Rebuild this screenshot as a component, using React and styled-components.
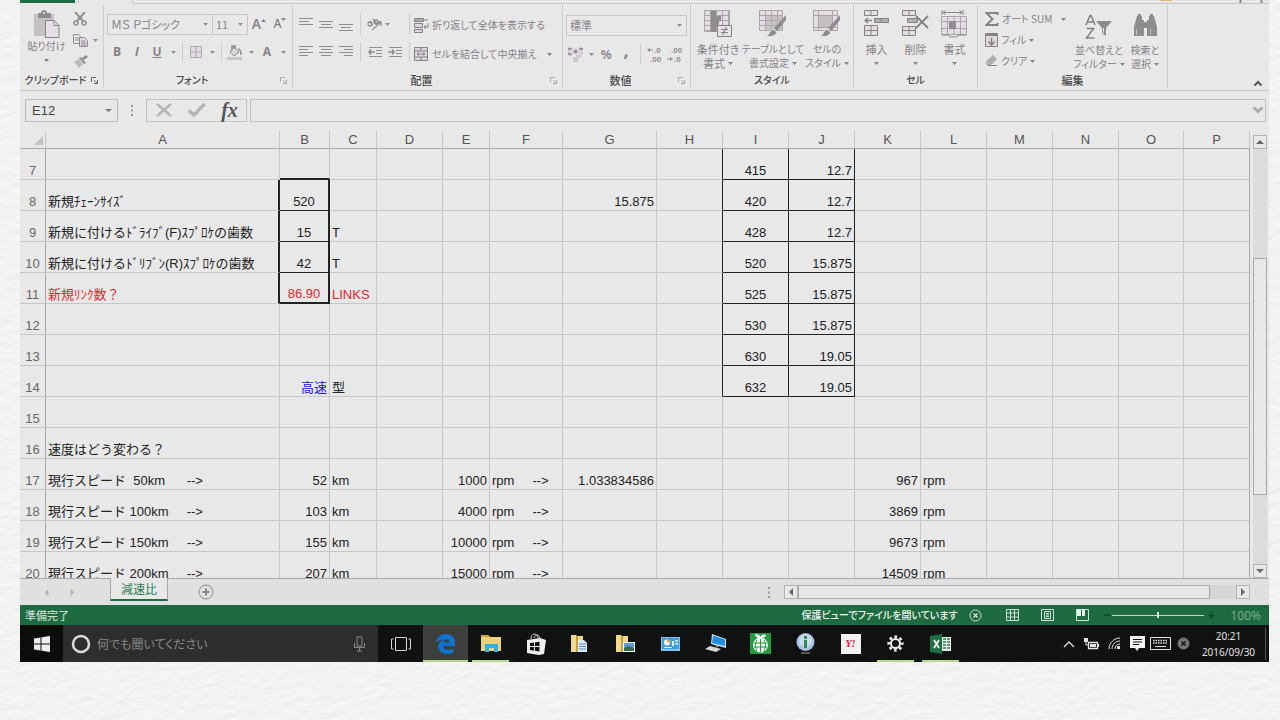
import React from "react";
import styled, { createGlobalStyle, css } from "styled-components";

const JP = `"Liberation Sans", "Noto Sans CJK JP", sans-serif`;
const UI = `"Noto Sans CJK JP", "Open Sans", sans-serif`;
const ink = "#8f8c8f";
const line = "#c6c6c6";

const GlobalStyle = createGlobalStyle`
  * { box-sizing: border-box; }
  body { margin: 0; background: #eeeeee; font-family: ${UI}; font-feature-settings: "palt"; }
  button, input, select { font: inherit; font-feature-settings: inherit; color: inherit; background: none; border: 0; padding: 0; margin: 0; border-radius: 0; }
  svg { display: block; flex: none; }
`;

const Paper = styled.svg`
  position: fixed;
  inset: 0;
  width: 100%;
  height: 100%;
  z-index: -1;
  opacity: 0.4;
`;
const Page = styled.div`
  min-height: 100vh;
  padding: 0 11px 58px 20px;
  overflow: hidden;
`;
const Window = styled.main`
  background: #e8e8e8;
`;

/* ---------- ribbon ---------- */
const TabStrip = styled.div`
  display: flex;
  align-items: flex-start;
  height: 5px;
`;
const FileTab = styled.div`
  width: 55px;
  height: 3px;
  background: #1f6b41;
`;
const OpenTab = styled.div`
  width: 55px;
  height: 3px;
  border-left: 1px solid ${line};
  border-right: 1px solid ${line};
  margin-left: 3px;
`;
const TabRule = styled.div`
  flex: 1;
  height: 4px;
  border-bottom: 1px solid ${line};
  display: flex;
  justify-content: flex-end;
`;
const Ribbon = styled.div`
  display: flex;
  height: 86px;
  padding-bottom: 2px;
  border-bottom: 1px solid ${line};
  color: #858285;
  font-size: 11px;
  line-height: 14px;
`;
const Group = styled.section`
  flex: none;
  width: ${(p) => p.$w}px;
  border-right: 1px solid #cdcdcd;
  display: flex;
  flex-direction: column;
`;
const GroupBody = styled.div`
  flex: 1;
  min-height: 0;
  display: flex;
  padding: 4px ${(p) => (p.$inset ? 1 : 3)}px 0 ${(p) => (p.$inset ? 7 : 3)}px;
`;
const GroupFoot = styled.div`
  height: 16px;
  display: flex;
  align-items: center;
  color: #4a4a4a;
`;
const GroupName = styled.span`
  flex: 1;
  text-align: center;
  white-space: nowrap;
  font-size: ${(p) => (p.$small ? 10 : 11)}px;
  font-weight: 500;
`;
const Launcher = styled.button`
  width: 12px;
  color: ${(p) => (p.$strong ? "#666" : "#aaa")};
`;
const Lines = styled.div`
  display: flex;
  flex-direction: column;
  gap: ${(p) => p.$gap || 3}px;
`;
const Line = styled.div`
  display: flex;
  align-items: center;
  height: ${(p) => p.$h || 22}px;
`;
const Tool = styled.button`
  display: flex;
  align-items: center;
  justify-content: ${(p) => (p.$start ? "flex-start" : "center")};
  flex: none;
  width: ${(p) => p.$w || 20}px;
  height: 20px;
  color: ${ink};
`;
const Letter = styled(Tool)`
  font-family: "Open Sans", sans-serif;
  font-size: ${(p) => p.$size || 12}px;
  font-weight: ${(p) => (p.$bold ? 700 : 600)};
  font-style: ${(p) => (p.$italic ? "italic" : "normal")};
  text-decoration: ${(p) => (p.$under ? "underline" : "none")};
  padding-bottom: ${(p) => (p.$raised ? 8 : 0)}px;
  color: #858285;
`;
const Rule = styled.span`
  width: 1px;
  height: 20px;
  margin: 0 ${(p) => p.$m ?? 4}px;
  background: #cdcdcd;
`;
const TextTool = styled.button`
  display: flex;
  align-items: center;
  gap: ${(p) => p.$gap ?? 3}px;
  height: 20px;
  white-space: nowrap;
  font-size: ${(p) => (p.$small ? 10 : 11)}px;
  svg:last-child:not(:first-child) { margin-left: ${(p) => p.$caretGap || 0}px; }
`;
const ComboBox = styled.label`
  display: flex;
  align-items: center;
  width: ${(p) => p.$w}px;
  height: 21px;
  border: 1px solid ${line};
  margin-right: ${(p) => (p.$join ? -1 : 0)}px;
  select {
    appearance: none;
    flex: 1;
    min-width: 0;
    height: 19px;
    padding-left: 3px;
    outline: 0;
    line-height: 16px;
  }
  svg { margin-right: 4px; pointer-events: none; color: ${ink}; }
`;
const BigTool = styled.button`
  display: flex;
  flex-direction: column;
  align-items: center;
  flex: none;
  width: ${(p) => p.$w}px;
  padding-top: ${(p) => (p.$low ? 5 : 1)}px;
  color: inherit;
  white-space: nowrap;
  font-size: ${(p) => (p.$small ? 10 : 11)}px;
  svg + span { margin-top: ${(p) => p.$drop ?? 4}px; }
`;
const Word = styled.span`
  display: flex;
  align-items: center;
  gap: 3px;
  min-height: 14px;
`;
const RibbonEnd = styled.div`
  flex: 1;
  display: flex;
  align-items: flex-end;
  justify-content: flex-end;
  padding-right: 6px;
`;

/* ---------- formula bar ---------- */
const FormulaBar = styled.div`
  display: flex;
  align-items: center;
  height: 40px;
  padding: 0 3px 2px 5px;
`;
const NameBox = styled.label`
  display: flex;
  align-items: center;
  width: 93px;
  height: 23px;
  border: 1px solid #bdbdbd;
  font: 13px ${JP};
  color: #444;
  input { flex: 1; min-width: 0; padding-left: 6px; outline: 0; }
  svg { margin-right: 5px; color: #777; }
`;
const Grip = styled.span`
  width: ${(p) => p.$w}px;
  display: flex;
  justify-content: center;
  color: #999;
`;
const FxBox = styled.div`
  display: flex;
  align-items: center;
  width: 101px;
  height: 23px;
  border: 1px solid #c3c3c3;
`;
const FxButton = styled.button`
  width: 33px;
  display: flex;
  justify-content: center;
  color: #b5b5b5;
`;
const FxMark = styled(FxButton)`
  font: italic bold 20px/20px "Liberation Serif", serif;
  color: #555;
`;
const FormulaField = styled.label`
  flex: 1;
  display: flex;
  align-items: center;
  height: 23px;
  margin-left: 3px;
  border: 1px solid #c3c3c3;
  color: #aaa;
  input { flex: 1; min-width: 0; outline: 0; color: #222; }
`;

/* ---------- sheet ---------- */
const SheetArea = styled.div`
  display: flex;
  height: 448px;
  overflow: hidden;
  border-bottom: 1px solid #a9a9a9;
`;
const Grid = styled.table`
  flex: 1;
  width: 100%;
  table-layout: fixed;
  border-collapse: separate;
  border-spacing: 0;
  font: 13px/16px ${JP};
  color: #222;
`;
const ColHead = styled.th`
  height: 18px;
  padding: 1px 0 0;
  font-weight: 400;
  color: #555;
  line-height: 16px;
  border-right: 1px solid ${line};
  border-bottom: 1px solid #a9a9a9;
  overflow: hidden;
`;
const Corner = styled(ColHead)`
  svg { margin-left: auto; margin-right: 2px; }
`;
const RowHead = styled.th`
  padding: 0;
  font-weight: 400;
  color: #666;
  vertical-align: bottom;
  text-align: center;
  border-right: 1px solid #a9a9a9;
  border-bottom: 1px solid ${line};
`;
const strong = "#222";
const Cell = styled.td`
  height: 31px;
  padding: 0 2px;
  vertical-align: bottom;
  white-space: pre;
  overflow: visible;
  text-align: ${(p) => p.$align || "left"};
  color: ${(p) => p.$color || "inherit"};
  border-right: 1px solid ${line};
  border-bottom: 1px solid ${line};
  ${(p) => p.$right && css`border-right: ${p.$right}px solid ${strong};`}
  ${(p) => p.$bottom && css`border-bottom: ${p.$bottom}px solid ${strong};`}
  ${(p) => p.$last && css`border-right-color: #a9a9a9;`}
`;

const VScroll = styled.div`
  width: 19px;
  padding: 4px 2px 0 3px;
  display: flex;
  flex-direction: column;
`;
const Arrow = styled.button`
  flex: none;
  width: 14px;
  height: 14px;
  border: 1px solid #b3b3b3;
  display: flex;
  align-items: center;
  justify-content: center;
  color: #666;
  background: #e8e8e8;
`;
const VTrack = styled.div`
  flex: 1;
  display: flex;
  flex-direction: column;
  background: #dcdcdc;
  width: 14px;
`;
const VThumb = styled.div`
  height: 237px;
  margin-top: 109px;
  border: 1px solid #a9a9a9;
  background: #e8e8e8;
`;

const SheetBar = styled.div`
  display: flex;
  align-items: center;
  height: 26px;
  padding-right: 19px;
  background: #e0e0e0;
`;
const NavArrow = styled.button`
  width: 26px;
  margin-left: ${(p) => p.$lead || 0}px;
  display: flex;
  justify-content: center;
  color: #b0b0b0;
`;
const SheetTab = styled.button`
  align-self: flex-start;
  width: 58px;
  height: 23px;
  margin: -1px 30px 0 25px;
  background: #e8e8e8;
  border-left: 1px solid #a9a9a9;
  border-right: 1px solid #a9a9a9;
  border-bottom: 2px solid #1f6b41;
  color: #2b7a50;
  font-size: 12px;
  line-height: 20px;
`;
const AddSheet = styled.button`
  display: flex;
  color: #888;
`;
const Fill = styled.div`
  flex: 1;
`;
const HScroll = styled.div`
  width: 466px;
  display: flex;
  background: #d6d6d6;
`;
const HTrack = styled.div`
  flex: 1;
`;
const HThumb = styled.div`
  width: 94%;
  height: 14px;
  border: 1px solid #a9a9a9;
  background: #e8e8e8;
`;

/* ---------- status bar ---------- */
const StatusBar = styled.footer`
  display: flex;
  align-items: center;
  height: 20px;
  padding: 0 8px 0 5px;
  background: #1f6b41;
  color: #dbe7df;
  font-size: 11px;
  line-height: 20px;
  white-space: nowrap;
`;
const Notice = styled.span`
  font-size: 10px;
  font-weight: 500;
  color: #eef4f0;
`;
const StatusButton = styled.button`
  display: flex;
  align-items: center;
  justify-content: center;
  width: ${(p) => p.$w || 20}px;
  margin-left: ${(p) => p.$ml || 0}px;
  color: ${(p) => p.$c || "#cfdfd5"};
`;
const ZoomSlider = styled.input`
  appearance: none;
  width: 92px;
  height: 12px;
  background: linear-gradient(#c4d6cb, #c4d6cb) center / 100% 1px no-repeat;
  &::-webkit-slider-thumb {
    appearance: none;
    width: 2px;
    height: 6px;
    background: #dbe7df;
  }
`;
const Percent = styled.span`
  margin-left: 12px;
  font: 12px "Open Sans", sans-serif;
  color: #7fb08f;
`;

/* ---------- taskbar ---------- */
const Taskbar = styled.nav`
  display: flex;
  height: 37px;
  background: #101211;
`;
const StartButton = styled.button`
  width: 43px;
  display: flex;
  align-items: center;
  justify-content: center;
  background: #0a0d09;
`;
const Search = styled.label`
  width: 315px;
  display: flex;
  align-items: center;
  gap: 6px;
  padding: 0 13px 0 8px;
  background: #2e2e2e;
  color: #8a8a8a;
  font-size: 12px;
  input { flex: 1; min-width: 0; outline: 0; }
  input::placeholder { color: #8a8a8a; opacity: 1; }
`;
const TaskButton = styled.button`
  width: 45px;
  display: flex;
  flex-direction: column;
  align-items: center;
  background: ${(p) => (p.$active ? "#3d3f3d" : "transparent")};
  &::after {
    content: "";
    width: ${(p) => (p.$active ? 45 : 37)}px;
    height: 2px;
    background: ${(p) => (p.$active || p.$open ? "#bcd68c" : "transparent")};
  }
`;
const TaskIcon = styled.span`
  flex: 1;
  display: flex;
  align-items: center;
  padding-top: 2px;
`;
const Tray = styled.div`
  margin-left: auto;
  display: flex;
  align-items: center;
  color: #e4e4e4;
`;
const TrayButton = styled.button`
  width: 23px;
  display: flex;
  justify-content: center;
`;
const Clock = styled.time`
  width: 71px;
  padding-right: 3px;
  text-align: center;
  font: 10px/16px "Noto Sans", sans-serif;
  border-right: 1px solid #555;
  margin-right: 3px;
`;

/* ---------- drawings ---------- */
const Svg = ({ w, h, vb, children, ...rest }) => (
  <svg width={w} height={h} viewBox={vb || `0 0 ${w} ${h}`} fill="none" stroke="currentColor" aria-hidden="true" {...rest}>
    {children}
  </svg>
);
const Caret = ({ w = 5 }) => (
  <Svg w={w} h={3} vb="0 0 6 3" preserveAspectRatio="none"><path d="M0 0h6L3 3z" fill="currentColor" stroke="none" /></Svg>
);
const Tri = ({ dir, s = 8 }) => {
  const d = { up: "M0 6h8L4 2z", down: "M0 2h8L4 6z", left: "M6 0v8L2 4z", right: "M2 0v8l4-4z" }[dir];
  return <Svg w={s} h={s} vb="0 0 8 8"><path d={d} fill="currentColor" stroke="none" /></Svg>;
};
const Dots = () => (
  <Svg w={3} h={11}><path d="M0 1h2M0 5.500h2M0 10h2" strokeWidth="2" /></Svg>
);
const LaunchIcon = () => (
  <Svg w={7} h={7}><path d="M.5 5V.5H5M3 3l3 3M6.500 3v3.500H3" /></Svg>
);
const PasteIcon = () => (
  <Svg w={27} h={28}>
    <path d="M1 4h20v22H1z" fill="#c4c1c4" stroke="none" />
    <path d="M5 3h3c0-4 6-4 6 0h4v5H5z" fill={ink} stroke="none" />
    <circle cx="11" cy="3" r="1" fill="#e8e8e8" stroke="none" />
    <path d="M12.500 10.500h8.500l5 5v12H12.500z" fill="#e6e0e6" />
    <path d="M21 10.500v5h5" />
  </Svg>
);
const CutIcon = () => (
  <Svg w={14} h={14} strokeWidth="2"><path d="M2 0l8 9M12 0L4 9" /><circle cx="3" cy="11" r="2" strokeWidth="1.500" /><circle cx="11" cy="11" r="2" strokeWidth="1.500" /></Svg>
);
const CopyIcon = () => (
  <Svg w={15} h={13}><path d="M.5.500h5l2 2v7h-7zM2 4h4M2 6h4" /><path d="M6.500 3.500h5l3 3v6h-8z" fill="#e0dbe0" /><path d="M8 7h4M8 9h5M8 11h5" /></Svg>
);
const BrushIcon = () => (
  <Svg w={15} h={13} stroke="none"><path d="M1 7l5-3 4 5-4 4z" fill="#bdbabd" /><path d="M6 3l2-1 5 6-2 1zM9 3l4-3 2 2-4 3z" fill={ink} /></Svg>
);
const BorderIcon = () => (
  <Svg w={12} h={12}><path d="M0 0h12v12H0z" fill="#e2dce2" stroke="none" /><path d="M.5.500h11v11H.500zM6 1v10M1 6h10" stroke="#aaa6aa" /></Svg>
);
const BucketIcon = () => (
  <Svg w={16} h={15}><path d="M7 2l5 5-5 4-4-4z" fill="#dcd7dc" /><path d="M5 5V1h3v3M11 4c3 0 3 3 3 6" strokeWidth="1.500" /><path d="M0 13.500h15" stroke="#c9c3c9" strokeWidth="3" /></Svg>
);
const Bars = ({ ws, align = 0, top = 0 }) => (
  <Svg w={14} h={14}>
    {ws.map((w, i) => {
      const x = align === 0 ? 0 : align === 1 ? (14 - w) / 2 : 14 - w;
      return <path key={i} d={`M${x} ${top + 1.5 + i * 3}h${w}`} />;
    })}
  </Svg>
);
const OrientIcon = () => (
  <Svg w={16} h={14} strokeWidth="1.300">
    <circle cx="3" cy="7" r="2" /><path d="M5 8L3 4M6 2l4 5" /><circle cx="9" cy="5" r="2" /><path d="M5 13l9-8M14 9V5h-4" />
  </Svg>
);
const IndentIcon = ({ out }) => (
  <Svg w={15} h={12}><path d="M1 1.500h13M8 4.500h6M8 7.500h6M1 10.500h13" /><path d={out ? "M7 6H1M3 3.500L1 6l2 2.500" : "M0 6h6M4 3.500L6 6 4 8.500"} strokeWidth="1.600" /></Svg>
);
const WrapIcon = () => (
  <Svg w={15} h={15}><path d="M.5.500h9v3h-9z" fill="#b0adb0" /><path d="M.5 5.500h8v4h-8zM.500 11.500h8v3h-8z" fill="#dcd7dc" /><path d="M10 2h4M14 5v4h-4M12 7l-2 2 2 2" /></Svg>
);
const MergeIcon = () => (
  <Svg w={14} h={14}><path d="M.5.500h13v13H.500zM0 4h14M0 10h14M7 0v4M7 10v4" fill="#dcd7dc" /><path d="M3 7h8M5 5.500L3 7l2 1.500M9 5.500L11 7 9 8.500" /></Svg>
);
const MoneyIcon = () => (
  <Svg w={16} h={15}><path d="M1 1.500h13v6H1z" fill="#dcd7dc" stroke="none" /><path d="M1 3.500v-2h3M11 1.500h3v2M1 5.500v2h3M14 5.500v1" strokeWidth="1.600" /><circle cx="7.500" cy="4.500" r="1.500" fill="currentColor" /><path d="M8 9h6M5 11.500h6M5 14h5" stroke="#bdbabd" strokeWidth="1.500" /></Svg>
);
const DecimalTool = ({ grow }) => (
  <Svg w={16} h={18} stroke="none" fill="currentColor" fontFamily="Liberation Sans" fontSize="8" fontWeight="700">
    <text x={grow ? 7 : 4} y="8">{grow ? ".0" : ".00"}</text>
    <text x={grow ? 3 : 7} y="17">{grow ? ".00" : ".0"}</text>
    <path d={grow ? "M0 5l3-2v1.500h3v1H3V7z" : "M6 14l-3-2v1.500H0v1h3V16z"} />
  </Svg>
);
const GridLines = ({ w, h }) => {
  let d = `M.5.500h${w}v${h}H.500z`;
  for (let x = 6; x < w; x += 6) d += `M${x + 0.5} .500v${h}`;
  for (let y = 5; y < h; y += 5) d += `M.5 ${y + 0.5}h${w}`;
  return <path d={d} fill="#e4dee4" stroke="#a9a6a9" />;
};
const CondIcon = () => (
  <Svg w={28} h={28}><GridLines w={25} h={21} /><path d="M7 1h5v21H7zM12 6h5v5h-5zM12 11h3v5h-3z" fill={ink} stroke="none" /><path d="M13.500 15.500h14v11h-14z" fill="#e8e3e8" /><path d="M17 19.500h7M17 22.500h7M22.500 17l-4 8" strokeWidth="1.200" /></Svg>
);
const PaintBrush = () => (
  <g stroke="none"><path d="M27 5v5l-9 11-3-3z" fill={ink} /><path d="M14 19l4 3c-2 5-7 5-11 4 4-1 3-6 7-7z" fill={ink} stroke="#e8e8e8" /></g>
);
const TableIcon = () => <Svg w={28} h={28}><GridLines w={23} h={20} /><path d="M7 6h16v15H7z" fill="#b3afb3" opacity=".6" stroke="none" /><PaintBrush /></Svg>;
const StyleIcon = () => <Svg w={28} h={28}><path d="M.5.500h24v20H.500zM5.500 0v21M19.500 0v21M0 5.500h24M0 17.500h24" fill="#e4dee4" stroke="#a9a6a9" /><path d="M6 6h13v11H6z" fill="#c3bfc3" stroke="none" /><PaintBrush /></Svg>;
const InsertIcon = () => (
  <Svg w={25} h={27}><path d="M.5.500h13v5H.500zM7 .500v5M.500 15.500h13v10H.500zM7 15.500v10M.500 20.500h13" fill="#e4dee4" /><path d="M10.500 8.500h14v4h-14z" fill="#b0adb0" /><path d="M17 8v5" /><path d="M8 10.500H1M4 8l-3 2.500L4 13" strokeWidth="1.400" /></Svg>
);
const DeleteIcon = () => (
  <Svg w={27} h={27}><path d="M.5.500h13v5H.500zM7 .500v5M.500 16.500h13v9H.500zM7 16.500v9M.500 20.500h13" fill="#e4dee4" /><path d="M5.500 8.500h10v4h-10z" fill="#b0adb0" /><path d="M14 6l12 12M26 6L14 18" strokeWidth="1.800" /></Svg>
);
const FormatIcon = () => (
  <Svg w={27} h={28}><path d="M1 0v5M22 0v5M2 2.500h19M4.500.500L2 2.500l2.500 2M18.500.500l2.500 2-2.500 2" /><path d="M.5 6.500h25v18H.500zM6.500 6v18M19.500 6v18M13 6v18M0 11.500h25M0 18.500h25" fill="#e4dee4" stroke="#a9a6a9" /><path d="M8 11h7v8H8z" fill={ink} stroke="none" /><path d="M1 25h6l3 2h5l3-2h7" /></Svg>
);
const SumIcon = () => <Svg w={14} h={14}><path d="M12.500 3V1H1.500l6 6-6 6h11v-2" strokeWidth="2" /></Svg>;
const FillIcon = () => <Svg w={13} h={14}><path d="M.5.500h12v13H.500z" fill="#dedade" /><path d="M1 2h11" strokeWidth="2" /><path d="M6.500 5v7M3.500 8.500l3 3.500 3-3.500" strokeWidth="1.600" /></Svg>;
const EraseIcon = () => <Svg w={13} h={12}><path d="M1 6l7-6 4 4-6 6H3z" fill="#b0adb0" stroke="none" /><path d="M0 7.500L3 10.500h9" /></Svg>;
const SortIcon = () => (
  <Svg w={28} h={26}><path d="M1 11L5 1.500h1L10 11M2.500 8h6M1.500 14.500h7l-7 9.500h8" strokeWidth="1.600" /><path d="M11 7h16l-6 7v8l-4-3v-5z" fill={ink} stroke="none" /><path d="M18.500 14v5" stroke="#e8e8e8" /></Svg>
);
const FindIcon = () => (
  <Svg w={25} h={24} stroke="none" fill={ink}><path d="M4 2h5v4h2v16H1V13zM16 2h5l3 11v9H14V6h2zM5 0h3v2H5zM17 0h3v2h-3zM11 8h3v6h-3z" /><path d="M3 15h1v6H3zM17 15h1v6h-1z" fill="#c4c1c4" /></Svg>
);
const WinLogo = () => <Svg w={16} h={16} stroke="none" fill="#eee"><path d="M0 2.500l6.500-1V7.500H0zM7.500 1.300L16 0v7.500H7.500zM0 8.500h6.500v6L0 13.500zM7.500 8.500H16V16l-8.500-1.300z" /></Svg>;
const MicIcon = () => <Svg w={11} h={16}><path d="M3 1h5v9H3zM.500 7v4.500h10V7M5.500 12v3M3 15h5" /></Svg>;
const ViewIcon = () => <Svg w={20} h={14} stroke="#d4d4d4"><path d="M4.500.500h11v13h-11zM2.500 2h-2v10h2M17.500 2h2v10h-2" /></Svg>;
const EdgeIcon = () => (
  <Svg w={19} h={20} stroke="none" fill="#0f74cf"><path d="M0 8.500C1 3 5 0 10 0c6 0 9 4 9 9v3H7c.3 4.500 6.500 5 10.500 2.500v4C15.500 19.500 13 20 11 20c-5 0-8.500-3-8.500-7.500 0-3.500 2-6 5-7C4.500 5.500 2 6.500 0 8.500zM7.200 8.500h6.300C13.500 4 7.500 4 7.200 8.500z" /></Svg>
);
const FolderIcon = () => <Svg w={20} h={17} stroke="none"><path d="M0 0h7l2 2h11v14H0z" fill="#f0d077" /><path d="M0 0h7l2 2H0z" fill="#d8a93b" /><path d="M4 9h13v8h-4v-4H8v4H4z" fill="#2cb1e6" /></Svg>;
const StoreIcon = () => <Svg w={20} h={22} stroke="none"><path d="M1 7l13-2 6 2-2 14-5 1L1 20z" fill="#f0f0f0" /><path d="M5 6c0-6 6-7 7-1M8 5c1-4 5-4 6 0" stroke="#ccc" fill="none" /><path d="M4 10l4-.5v3.500H4zM9 9.300l4.500-.5V13H9zM4 14h4v3.700L4 17zM9 14h4.500v4.500L9 17.800z" fill="#111" /></Svg>;
const FolderDoc = ({ photo }) => (
  <Svg w={19} h={19} stroke="none"><path d="M0 1h5l1 1h6v16H0z" fill="#f1d88b" /><path d="M5 2h2v16H5z" fill="#c79d45" />
    {photo ? <><path d="M7 8h12v10H7z" fill="#eef4fa" /><path d="M8 9h10v8H8z" fill="#5b9bd8" /><path d="M8 14l4-2 6 2v3H8z" fill="#3c6b4c" /></>
      : <><path d="M7 6h6l3 3v9H7z" fill="#dfeaf5" /><path d="M8 10h7M8 12.500h7M8 15h7" stroke="#4e8ec6" /></>}
  </Svg>
);
const PanelIcon = () => <Svg w={19} h={14} stroke="none"><path d="M0 0h19v14H0z" fill="#7cc5ee" /><path d="M1 1h17v11H1z" fill="#3f9fdc" /><circle cx="6" cy="5.500" r="3" fill="#fff" /><path d="M6 5.500V2.500a3 3 0 0 1 3 3z" fill="#f2a52c" /><path d="M11 4h2v5h-2zM14 3h3v1.500h-3zM14 6h3v1.500h-3zM3 10h8v1H3z" fill="#d8effb" /></Svg>;
const PcIcon = () => <Svg w={21} h={19} stroke="none"><path d="M7 0l14 5v9L6 10z" fill="#cfe6f6" /><path d="M8 1.500l12 4V12L7 9z" fill="#1f8fe0" /><path d="M0 15l5-3 11 3-5 3z" fill="#d5d9dc" /><path d="M9 11l5 1.500-2 1z" fill="#999" /></Svg>;
const MelonIcon = () => <Svg w={21} h={21} stroke="none"><path d="M0 0h21v21H0z" fill="#239a40" /><circle cx="10.500" cy="12" r="7.500" fill="#f2f7f2" /><path d="M10 5C6 5 5 3 5 1c3 0 5 1 5.500 3C11 2 13 1 16 2c0 2-2 3-5 3z" fill="#f2f7f2" /><path d="M4 10h13M4 14h13M10.500 6v13M7 7c-2 4-2 7 0 11M14 7c2 4 2 7 0 11" stroke="#239a40" fill="none" /></Svg>;
const InfoIcon = () => <Svg w={19} h={21} stroke="none"><circle cx="9.500" cy="9" r="9" fill="#a9c2e4" /><circle cx="9.500" cy="7.500" r="6.500" fill="#c9daf0" /><path d="M8 3h3v3H8zM8 7h3v8H8z" fill="#2c8c46" /><path d="M5 20h9" stroke="#999" /></Svg>;
const YahooTile = styled.span`
  width: 20px;
  height: 20px;
  background: #f1f1f1;
  color: #d6163a;
  font: italic bold 10px/20px "Liberation Serif", serif;
  text-align: center;
`;
const GearIcon = () => (
  <Svg w={17} h={17} stroke="#f0f0f0">
    <circle cx="8.500" cy="8.500" r="4.500" strokeWidth="2" />
    <circle cx="8.500" cy="8.500" r="6.800" strokeWidth="2.600" strokeDasharray="2.670 2.670" strokeDashoffset="1.300" />
  </Svg>
);
const ExcelIcon = () => (
  <Svg w={21} h={20} stroke="none"><path d="M10 3h11v14H10z" fill="#e6efe9" /><path d="M13 5h3M17 5h3M13 8h3M17 8h3M13 11h3M17 11h3M13 14h3M17 14h3" stroke="#2f7d50" strokeWidth="1.500" /><path d="M0 2l12-2v20L0 18z" fill="#1f7145" /><path d="M4 6l5 8M9 6l-5 8" stroke="#f0f0f0" strokeWidth="1.800" /></Svg>
);
const CircleX = ({ filled }) => (
  <Svg w={13} h={13}><circle cx="6.500" cy="6.500" r="5.500" fill={filled ? "#777" : "none"} stroke={filled ? "#777" : "currentColor"} /><path d="M4.500 4.500l4 4M8.500 4.500l-4 4" strokeWidth="1.400" stroke={filled ? "#111" : "currentColor"} /></Svg>
);

/* ---------- data ---------- */
const columns = [
  ["A", 234], ["B", 50], ["C", 47], ["D", 66], ["E", 47], ["F", 73], ["G", 94], ["H", 66],
  ["I", 66], ["J", 66], ["K", 66], ["L", 66], ["M", 66], ["N", 66], ["O", 65], ["P", 66],
];
const red = "#e0262c";
const v = (text, align, color) => ({ text, align, color });
const chain = { 7: ["415", "12.7"], 8: ["420", "12.7"], 9: ["428", "12.7"], 10: ["520", "15.875"], 11: ["525", "15.875"], 12: ["530", "15.875"], 13: ["630", "19.05"], 14: ["632", "19.05"] };
const cells = {
  8: { A: v("新規ﾁｪｰﾝｻｲｽﾞ"), B: v("520", "center"), G: v("15.875", "right") },
  9: { A: v("新規に付けるﾄﾞﾗｲﾌﾞ(F)ｽﾌﾟﾛｹの歯数"), B: v("15", "center"), C: v("T") },
  10: { A: v("新規に付けるﾄﾞﾘﾌﾞﾝ(R)ｽﾌﾟﾛｹの歯数"), B: v("42", "center"), C: v("T") },
  11: { A: v("新規ﾘﾝｸ数？", "left", red), B: v("86.90", "center", red), C: v("LINKS", "left", red) },
  14: { B: v("高速", "right", "#1717e0"), C: v("型") },
  16: { A: v("速度はどう変わる？") },
  17: { A: v("現行スピード  50km      -->"), B: v("52", "right"), C: v("km"), E: v("1000", "right"), F: v("rpm     -->"), G: v("1.033834586", "right"), K: v("967", "right"), L: v("rpm") },
  18: { A: v("現行スピード 100km     -->"), B: v("103", "right"), C: v("km"), E: v("4000", "right"), F: v("rpm     -->"), K: v("3869", "right"), L: v("rpm") },
  19: { A: v("現行スピード 150km     -->"), B: v("155", "right"), C: v("km"), E: v("10000", "right"), F: v("rpm     -->"), K: v("9673", "right"), L: v("rpm") },
  20: { A: v("現行スピード 200km     -->"), B: v("207", "right"), C: v("km"), E: v("15000", "right"), F: v("rpm     -->"), K: v("14509", "right"), L: v("rpm") },
};
const rows = [7, 8, 9, 10, 11, 12, 13, 14, 15, 16, 17, 18, 19, 20];

function edges(row, col) {
  const e = {};
  if (col === "A" && row >= 8 && row <= 11) e.$right = 2;
  if (col === "B" && row === 7) e.$bottom = 2;
  if (col === "B" && row >= 8 && row <= 11) { e.$right = 2; e.$bottom = row === 11 ? 2 : 1; }
  if (row <= 14 && "HIJ".includes(col)) e.$right = 1;
  if (row <= 14 && "IJ".includes(col)) e.$bottom = 1;
  return e;
}

function Footer({ name, launcher, small, strong: s }) {
  return (
    <GroupFoot>
      <GroupName $small={small}>{name}</GroupName>
      {launcher && <Launcher $strong={s} aria-label={`${name}の設定`}><LaunchIcon /></Launcher>}
    </GroupFoot>
  );
}

function RibbonArea() {
  return (
    <Ribbon>
      <Group $w={84}>
        <GroupBody>
          <BigTool $w={47} $drop={1} $small><PasteIcon /><span>貼り付け</span><Word><Caret /></Word></BigTool>
          <Lines $gap={1}>
            <Line $h={20}><Tool aria-label="切り取り"><CutIcon /></Tool></Line>
            <Line $h={20}><Tool aria-label="コピー"><CopyIcon /></Tool><Tool $w={10} aria-label="コピーのオプション"><Caret /></Tool></Line>
            <Line $h={20}><Tool aria-label="書式のコピー"><BrushIcon /></Tool></Line>
          </Lines>
        </GroupBody>
        <Footer name="クリップボード" launcher strong small />
      </Group>

      <Group $w={189}>
        <GroupBody>
          <Lines>
            <Line $h={30}>
              <ComboBox $w={106} $join><select aria-label="フォント"><option>ＭＳ Ｐゴシック</option></select><Caret /></ComboBox>
              <ComboBox $w={36}><select aria-label="フォント サイズ"><option>11</option></select><Caret /></ComboBox>
              <Letter $size={14} $w={22} aria-label="フォント サイズの拡大">A<Svg w={5} h={10}><path d="M0 3h5L2.500 0z" fill="currentColor" stroke="none" /></Svg></Letter>
              <Letter aria-label="フォント サイズの縮小">A<Svg w={5} h={12}><path d="M0 0h5L2.500 3z" fill="currentColor" stroke="none" /></Svg></Letter>
            </Line>
            <Line $h={20}>
              <Letter $bold>B</Letter><Letter $italic $bold>I</Letter><Letter $under $bold>U</Letter>
              <Tool $w={12} aria-label="下線のオプション"><Caret /></Tool><Rule $m={3} />
              <Tool aria-label="罫線"><BorderIcon /></Tool><Tool $w={12} aria-label="罫線のオプション"><Caret /></Tool><Rule $m={3} />
              <Tool aria-label="塗りつぶしの色"><BucketIcon /></Tool><Tool $w={12} aria-label="塗りつぶしのオプション"><Caret /></Tool>
              <Letter $bold>A</Letter><Tool $w={12} aria-label="文字色のオプション"><Caret /></Tool>
            </Line>
          </Lines>
        </GroupBody>
        <Footer name="フォント" launcher small />
      </Group>

      <Group $w={270}>
        <GroupBody>
          <Lines>
            <Line $h={30}>
              <Tool aria-label="上揃え"><Bars ws={[14, 10, 14]} /></Tool>
              <Tool aria-label="上下中央揃え"><Bars ws={[14, 10, 14]} align={1} top={3} /></Tool>
              <Tool aria-label="下揃え"><Bars ws={[14, 10, 14]} align={1} top={6} /></Tool>
              <Rule /><Tool aria-label="方向"><OrientIcon /></Tool><Tool $start aria-label="方向のオプション"><Caret /></Tool>
              <Rule />
            </Line>
            <Line $h={20}>
              <Tool aria-label="左揃え"><Bars ws={[14, 9, 14, 9]} /></Tool>
              <Tool aria-label="中央揃え"><Bars ws={[14, 10, 14, 10]} align={1} /></Tool>
              <Tool aria-label="右揃え"><Bars ws={[14, 9, 14, 9]} align={2} /></Tool>
              <Rule /><Tool aria-label="インデントを減らす"><IndentIcon out /></Tool><Tool aria-label="インデントを増やす"><IndentIcon /></Tool>
              <Rule />
            </Line>
          </Lines>
          <Lines>
            <Line $h={32}><TextTool $small><WrapIcon />折り返して全体を表示する</TextTool></Line>
            <Line $h={20}><TextTool $small $gap={4} $caretGap={6}><MergeIcon />セルを結合して中央揃え<Caret /></TextTool></Line>
          </Lines>
        </GroupBody>
        <Footer name="配置" launcher />
      </Group>

      <Group $w={128}>
        <GroupBody>
          <Lines>
            <Line $h={32}><ComboBox $w={121}><select aria-label="表示形式"><option>標準</option></select><Caret /></ComboBox></Line>
            <Line $h={20}>
              <Tool aria-label="通貨"><MoneyIcon /></Tool><Tool $w={10} aria-label="通貨のオプション"><Caret /></Tool>
              <Letter $size={13}>%</Letter><Letter $size={18} $bold $raised>,</Letter><Rule />
              <Tool aria-label="小数点以下の桁数を増やす"><DecimalTool grow /></Tool><Tool aria-label="小数点以下の桁数を減らす"><DecimalTool /></Tool>
            </Line>
          </Lines>
        </GroupBody>
        <Footer name="数値" launcher />
      </Group>

      <Group $w={163}>
        <GroupBody>
          <BigTool $w={48}><CondIcon /><span>条件付き</span><Word>書式<Caret /></Word></BigTool>
          <BigTool $w={62} $small><TableIcon /><span>テーブルとして</span><Word>書式設定<Caret /></Word></BigTool>
          <BigTool $w={46} $small><StyleIcon /><span>セルの</span><Word>スタイル<Caret /></Word></BigTool>
        </GroupBody>
        <Footer name="スタイル" small />
      </Group>

      <Group $w={124}>
        <GroupBody>
          <BigTool $w={39} $drop={5}><InsertIcon /><span>挿入</span><Word><Caret /></Word></BigTool>
          <BigTool $w={39} $drop={5}><DeleteIcon /><span>削除</span><Word><Caret /></Word></BigTool>
          <BigTool $w={39}><FormatIcon /><span>書式</span><Word><Caret /></Word></BigTool>
        </GroupBody>
        <Footer name="セル" small />
      </Group>

      <Group $w={190}>
        <GroupBody $inset>
          <Lines $gap={1}>
            <Line $h={20}><TextTool $small $caretGap={6}><SumIcon />オート SUM<Caret /></TextTool></Line>
            <Line $h={20}><TextTool $small><FillIcon />フィル<Caret /></TextTool></Line>
            <Line $h={20}><TextTool $small><EraseIcon />クリア<Caret /></TextTool></Line>
          </Lines>
          <Fill />
          <BigTool $w={50} $drop={3} $low $small><SortIcon /><span>並べ替えと</span><Word>フィルター<Caret /></Word></BigTool>
          <BigTool $w={42} $drop={5} $low $small><FindIcon /><span>検索と</span><Word>選択<Caret /></Word></BigTool>
        </GroupBody>
        <Footer name="編集" />
      </Group>
      <RibbonEnd>
        <button aria-label="リボンを折りたたむ"><Svg w={10} h={8} strokeWidth="2" color="#555"><path d="M1.500 5.500L5 2l3.500 3.500" /></Svg></button>
      </RibbonEnd>
    </Ribbon>
  );
}

function Sheet() {
  return (
    <SheetArea>
      <Grid>
        <colgroup><col style={{ width: 26 }} />{columns.map(([n, w]) => <col key={n} style={{ width: w }} />)}</colgroup>
        <thead>
          <tr>
            <Corner><Svg w={9} h={9}><path d="M9 0v9H0z" fill="#c4c4c4" stroke="none" /></Svg></Corner>
            {columns.map(([n]) => <ColHead key={n} scope="col">{n}</ColHead>)}
          </tr>
        </thead>
        <tbody>
          {rows.map((r) => (
            <tr key={r}>
              <RowHead scope="row">{r}</RowHead>
              {columns.map(([n]) => {
                let c = (cells[r] && cells[r][n]) || {};
                if (chain[r] && n === "I") c = v(chain[r][0], "center");
                if (chain[r] && n === "J") c = v(chain[r][1], "right");
                return <Cell key={n} $align={c.align} $color={c.color} $last={n === "P"} {...edges(r, n)}>{c.text}</Cell>;
              })}
            </tr>
          ))}
        </tbody>
      </Grid>
      <VScroll>
        <Arrow aria-label="上へ"><Tri dir="up" /></Arrow>
        <VTrack><VThumb /></VTrack>
        <Arrow aria-label="下へ"><Tri dir="down" /></Arrow>
      </VScroll>
    </SheetArea>
  );
}

const tasks = [
  ["タスク ビュー", <ViewIcon />], ["Edge", <EdgeIcon />, "active"], ["エクスプローラー", <FolderIcon />, "open"],
  ["ストア", <StoreIcon />], ["ドキュメント", <FolderDoc />], ["ピクチャ", <FolderDoc photo />], ["コントロール パネル", <PanelIcon />],
  ["PC", <PcIcon />], ["地図", <MelonIcon />], ["情報", <InfoIcon />], ["Yahoo!", <YahooTile>Y!</YahooTile>],
  ["設定", <GearIcon />, "open"], ["Excel", <ExcelIcon />, "open"],
];

export default function App() {
  return (
    <Page>
      <GlobalStyle />
      <Paper aria-hidden="true">
        <filter id="paper" x="0" y="0" width="100%" height="100%">
          <feTurbulence type="fractalNoise" baseFrequency="0.06 0.13" numOctaves="4" seed="7" />
          <feDiffuseLighting lightingColor="#ffffff" surfaceScale="0.7" diffuseConstant="1.12">
            <feDistantLight azimuth="60" elevation="58" />
          </feDiffuseLighting>
        </filter>
        <rect width="100%" height="100%" filter="url(#paper)" />
      </Paper>
      <Window>
        <TabStrip>
          <FileTab /><OpenTab />
          <TabRule><Svg w={110} h={3}><path d="M1 0h12" stroke="#e0b878" strokeWidth="2" /><path d="M81.500 0v3M102.500 0v3" stroke="#888" strokeWidth="2" /></Svg></TabRule>
        </TabStrip>
        <RibbonArea />
        <FormulaBar>
          <NameBox><input aria-label="名前ボックス" defaultValue="E12" /><Caret w={7} /></NameBox>
          <Grip $w={28}><Dots /></Grip>
          <FxBox>
            <FxButton aria-label="キャンセル"><Svg w={16} h={14} strokeWidth="2.500"><path d="M1 1l14 12M15 1L1 13" /></Svg></FxButton>
            <FxButton aria-label="入力"><Svg w={18} h={14} strokeWidth="3.500"><path d="M1 7.500l5 4.500L16.500 1" /></Svg></FxButton>
            <FxMark aria-label="関数の挿入">fx</FxMark>
          </FxBox>
          <FormulaField><input aria-label="数式バー" /><Svg w={13} h={8} strokeWidth="3"><path d="M1.500 1.500l4.500 4 4.500-4" /></Svg></FormulaField>
        </FormulaBar>
        <Sheet />
        <SheetBar>
          <NavArrow $lead={13} aria-label="前のシート"><Tri dir="left" s={7} /></NavArrow>
          <NavArrow aria-label="次のシート"><Tri dir="right" s={7} /></NavArrow>
          <SheetTab>減速比</SheetTab>
          <AddSheet aria-label="新しいシート"><Svg w={16} h={16}><circle cx="8" cy="8" r="7" /><path d="M8 4.500v7M4.500 8h7" strokeWidth="2" /></Svg></AddSheet>
          <Fill />
          <Grip $w={30}><Dots /></Grip>
          <HScroll>
            <Arrow aria-label="左へ"><Tri dir="left" /></Arrow>
            <HTrack><HThumb /></HTrack>
            <Arrow aria-label="右へ"><Tri dir="right" /></Arrow>
          </HScroll>
        </SheetBar>
        <StatusBar>
          <span>準備完了</span>
          <Fill />
          <Notice>保護ビューでファイルを開いています</Notice>
          <StatusButton $ml={8} aria-label="閉じる"><CircleX /></StatusButton>
          <StatusButton $ml={17} aria-label="標準"><Svg w={13} h={12}><path d="M.5.500h12v11H.500zM4.500 0v12M8.500 0v12M0 4h13M0 8h13" /></Svg></StatusButton>
          <StatusButton $ml={15} aria-label="ページ レイアウト"><Svg w={13} h={12}><path d="M.5.500h12v11H.500zM3.500 2.500h6v7h-6zM5 4.500h3M5 6h3M5 7.500h3" /></Svg></StatusButton>
          <StatusButton $ml={15} aria-label="改ページ プレビュー"><Svg w={13} h={12}><path d="M.5.500h12v11H.500z" /><path d="M1 0h4v7H1zM6 0h3v7H6z" fill="#e6efe9" stroke="none" /></Svg></StatusButton>
          <StatusButton $ml={10} $w={10} $c="#12472a" aria-label="縮小"><Svg w={6} h={6}><path d="M0 3h6" strokeWidth="1.500" /></Svg></StatusButton>
          <ZoomSlider type="range" aria-label="ズーム" min="0" max="200" defaultValue="100" />
          <StatusButton $w={14} $c="#12472a" aria-label="拡大"><Svg w={7} h={7}><path d="M0 3.500h7M3.500 0v7" strokeWidth="1.500" /></Svg></StatusButton>
          <Percent>100%</Percent>
        </StatusBar>
        <Taskbar>
          <StartButton aria-label="スタート"><WinLogo /></StartButton>
          <Search>
            <Svg w={20} h={20}><circle cx="10" cy="10" r="8" stroke="#dcdcdc" strokeWidth="2.500" /></Svg>
            <input aria-label="検索" placeholder="何でも聞いてください" />
            <MicIcon />
          </Search>
          {tasks.map(([name, icon, state]) => (
            <TaskButton key={name} aria-label={name} $active={state === "active"} $open={state === "open"}><TaskIcon>{icon}</TaskIcon></TaskButton>
          ))}
          <Tray>
            <TrayButton aria-label="隠れているインジケーター"><Svg w={12} h={8}><path d="M1 7l5-5 5 5" strokeWidth="1.300" /></Svg></TrayButton>
            <TrayButton aria-label="電源"><Svg w={16} h={12}><path d="M4.500 4.500h9v6h-9zM14.500 6v3" strokeWidth="1.300" /><path d="M6 6h6v3H6zM0 0h4v4H0z" fill="currentColor" stroke="none" /><path d="M2 4v3h2" /></Svg></TrayButton>
            <TrayButton aria-label="ネットワーク"><Svg w={13} h={13}><path d="M1 12C1 6 6 1 12 1M4 12c0-4 3-8 8-8M7 12c0-3 2-5 5-5" /><path d="M9 9h3v3H9z" fill="currentColor" stroke="none" /></Svg></TrayButton>
            <TrayButton aria-label="通知"><Svg w={15} h={15} stroke="none"><path d="M0 0h15v12H9l-2 3-2-3H0z" fill="#f4f4f4" /><path d="M3 3.500h9M3 6h9M3 8.500h6" stroke="#111" /></Svg></TrayButton>
            <TrayButton aria-label="タッチ キーボード"><Svg w={21} h={13}><path d="M.5.500h20v12H.500z" /><path d="M3 3.500h15M3 6h15" strokeDasharray="1.500 1" strokeWidth="1.500" /><path d="M5 9.500h11" /></Svg></TrayButton>
            <TrayButton aria-label="状態"><CircleX filled /></TrayButton>
            <Clock>20:21<br />2016/09/30</Clock>
          </Tray>
        </Taskbar>
      </Window>
    </Page>
  );
}
